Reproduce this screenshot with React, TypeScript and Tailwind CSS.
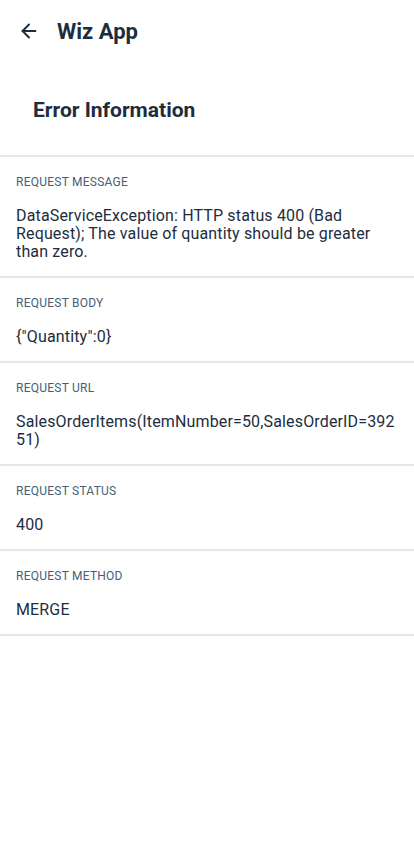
import { ArrowLeft } from "lucide-react";

type Field = { label: string; value: string };

const FIELDS: Field[] = [
  {
    label: "Request Message",
    value:
      "DataServiceException: HTTP status 400 (Bad Request); The value of quantity should be greater than zero.",
  },
  { label: "Request Body", value: '{"Quantity":0}' },
  { label: "Request URL", value: "SalesOrderItems(ItemNumber=50,SalesOrderID=39251)" },
  { label: "Request Status", value: "400" },
  { label: "Request Method", value: "MERGE" },
];

export default function App() {
  return (
    <div
      className="min-h-[850px] w-[414px] bg-white text-[#1d2d3e]"
      style={{ fontFamily: "Roboto, 'Liberation Sans', sans-serif" }}
    >
      {/* Top bar */}
      <header className="flex h-[62px] items-center pl-[18px]">
        <ArrowLeft className="h-[22px] w-[22px] text-[#1d2d3e]" strokeWidth={2.2} />
        <h1 className="ml-[17px] text-[22px] font-bold">Wiz App</h1>
      </header>

      {/* Page title */}
      <div className="flex h-[93px] items-center pt-[5px] pl-[33px]">
        <h2 className="text-[21px] font-bold">Error Information</h2>
      </div>

      {/* Fields */}
      <div className="border-t-2 border-[#e5e8eb]">
        {FIELDS.map((f) => (
          <div key={f.label} className="border-b-2 border-[#e5e8eb] px-4 pt-[16px] pb-[15px]">
            <div className="text-[12px] leading-[18px] uppercase tracking-[0.02em] text-[#475e75]">
              {f.label}
            </div>
            <div className="mt-4 text-[16px] leading-[18px] tracking-[0.15px] text-[#1d2d3e] [overflow-wrap:anywhere]">
              {f.value}
            </div>
          </div>
        ))}
      </div>
    </div>
  );
}
